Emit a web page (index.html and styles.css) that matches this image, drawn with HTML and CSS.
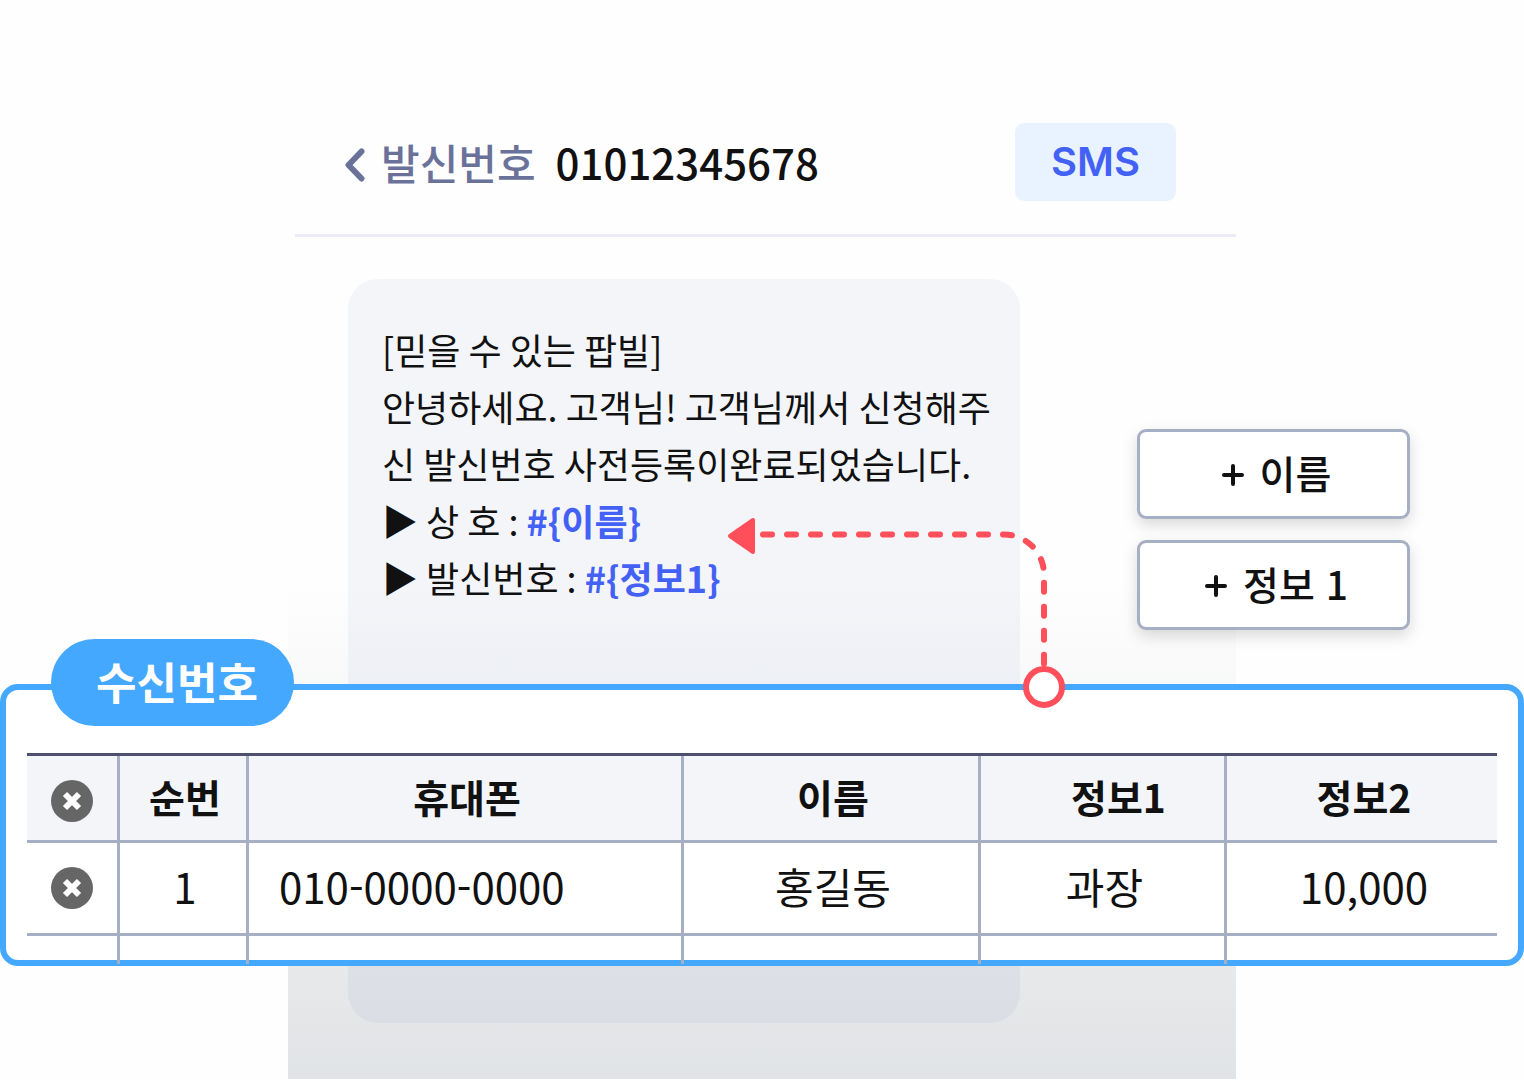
FILE: index.html
```html
<!DOCTYPE html>
<html lang="ko">
<head>
    <meta charset="UTF-8">
    <meta name="viewport" content="width=device-width, initial-scale=1.0">
    <title>문자 발신</title>
    <link rel="stylesheet" href="styles.css">
</head>
<body>
    <div class="stage">
        <main class="phone">
            <header class="phone-header">
                <button class="back" type="button" aria-label="뒤로">
                    <svg width="20" height="34" viewBox="0 0 20 34" fill="none" stroke="currentColor" stroke-width="6" stroke-linecap="round" stroke-linejoin="round">
                        <path d="M16.5 3.5 3.5 17l13 13.5"/>
                    </svg>
                </button>
                <span class="sender-label">발신번호</span>
                <span class="sender-number">01012345678</span>
                <span class="badge">SMS</span>
            </header>
            <div class="bubble">
                <p>[믿을 수 있는 팝빌]</p>
                <p>안녕하세요. 고객님! 고객님께서 신청해주신 발신번호 사전등록이완료되었습니다.</p>
                <p>▶ 상 호 : <b>#{이름}</b></p>
                <p>▶ 발신번호 : <b>#{정보1}</b></p>
            </div>
        </main>

        <div class="options">
            <button type="button">
                <svg width="22" height="22" viewBox="0 0 22 22" stroke="currentColor" stroke-width="4" stroke-linecap="round">
                    <path d="M2 11h18M11 2v18"/>
                </svg>
                이름
            </button>
            <button type="button">
                <svg width="22" height="22" viewBox="0 0 22 22" stroke="currentColor" stroke-width="4" stroke-linecap="round">
                    <path d="M2 11h18M11 2v18"/>
                </svg>
                정보 1
            </button>
        </div>

        <section class="recipients">
            <h2 class="pill">수신번호</h2>
            <table>
                <colgroup>
                    <col class="col-delete">
                    <col class="col-no">
                    <col class="col-phone">
                    <col class="col-name">
                    <col class="col-info1">
                    <col class="col-info2">
                </colgroup>
                <thead>
                    <tr>
                        <th>
                            <button class="delete" type="button" aria-label="전체 삭제">
                                <svg width="20" height="20" viewBox="0 0 20 20" stroke="#fff" stroke-width="6"><path d="M3 3l14 14M17 3 3 17"/></svg>
                            </button>
                        </th>
                        <th>순번</th>
                        <th>휴대폰</th>
                        <th>이름</th>
                        <th class="info1">정보1</th>
                        <th>정보2</th>
                    </tr>
                </thead>
                <tbody>
                    <tr>
                        <td>
                            <button class="delete" type="button" aria-label="삭제">
                                <svg width="20" height="20" viewBox="0 0 20 20" stroke="#fff" stroke-width="6"><path d="M3 3l14 14M17 3 3 17"/></svg>
                            </button>
                        </td>
                        <td>1</td>
                        <td class="number">010-0000-0000</td>
                        <td>홍길동</td>
                        <td>과장</td>
                        <td>10,000</td>
                    </tr>
                    <tr class="next-row">
                        <td></td>
                        <td></td>
                        <td></td>
                        <td></td>
                        <td></td>
                        <td></td>
                    </tr>
                </tbody>
            </table>
            <!-- arrow from the list up to the variable in the message -->
            <svg class="arrow" width="344" height="196" viewBox="0 0 344 196" fill="none" stroke="#ff4f5b">
                <path d="M39 20.5h241a40 40 0 0 1 40 40V153" stroke-width="6" stroke-linecap="round" stroke-dasharray="9 15"/>
                <path d="M6 22 29 6v32z" fill="#ff4f5b" stroke-width="4" stroke-linejoin="round"/>
                <circle cx="320" cy="173" r="18" fill="#fff" stroke-width="6"/>
            </svg>
        </section>
    </div>
</body>
</html>
```

FILE: styles.css
```css
* {
    box-sizing: border-box;
}
body {
    margin: 0;
    background-color: #fefefe;
    color: #111;
    font-family: "Noto Sans CJK KR", sans-serif;
}
button {
    font-family: inherit;
    color: inherit;
    cursor: pointer;
}
/* the phone, the option buttons and the list share one grid and overlap */
.stage {
    display: grid;
    grid-template-columns: 288fr 948fr 288fr;
    grid-template-rows: 684px auto 1fr;
}
.phone {
    grid-column: 2;
    grid-row: 1 / 4;
    position: relative;
    padding-bottom: 56px;
}
.phone::after {
    content: "";
    position: absolute;
    inset: 0;
    background: linear-gradient(rgba(10, 30, 50, 0) 54%, rgba(10, 30, 50, 0.12));
    pointer-events: none;
}
.phone-header {
    display: flex;
    align-items: center;
    margin-left: 7px;
    padding: 123px 60px 33px 50px;
    border-bottom: 3px solid #eaebf7;
    font-size: 42px;
    font-weight: 500;
    line-height: 78px;
}
.back {
    display: flex;
    padding: 5px 0 0;
    border: none;
    background: none;
    color: #6b7299;
}
.sender-label {
    margin-left: 16px;
    color: #6b7299;
}
.sender-number {
    margin-left: 20px;
}
.badge {
    margin-left: auto;
    padding: 0 36px;
    border-radius: 9px;
    background-color: #e9f3ff;
    color: #4461f5;
    font-family: Inter, sans-serif;
    font-size: 40px;
    font-weight: 600;
}
.bubble {
    min-height: 744px;
    margin: 42px 216px 0 60px;
    padding: 42px 16px 42px 34px;
    border-radius: 30px;
    background-color: #f3f5f9;
    font-size: 36px;
    font-feature-settings: "locl" 0, "calt" 0, "ccmp" 0;
    line-height: 57px;
}
.bubble p {
    margin: 0;
}
.bubble b {
    color: #4461f5;
}
.options {
    grid-column: 2 / 4;
    grid-row: 1;
    justify-self: end;
    align-self: end;
    z-index: 1;
    display: flex;
    flex-direction: column;
    gap: 21px;
    width: 273px;
    margin: 0 114px 54px 0;
}
.options button {
    display: flex;
    align-items: center;
    justify-content: center;
    gap: 16px;
    height: 90px;
    padding: 0 0 4px 6px;
    border: 3px solid #a6afc3;
    border-radius: 9px;
    background-color: #fff;
    box-shadow: 0 6px 15px rgba(0, 0, 0, 0.15);
    font-size: 39px;
    font-weight: 500;
}
.options svg {
    margin-top: 6px;
}
.recipients {
    grid-column: 1 / 4;
    grid-row: 2;
    position: relative;
    z-index: 2;
    padding: 63px 21px 0;
    border: 6px solid #45a8ff;
    border-radius: 18px;
    background-color: #fff;
}
.pill {
    position: absolute;
    top: -51px;
    left: 45px;
    margin: 0;
    padding: 2px 36px 4px 45px;
    border-radius: 44px;
    background-color: #45a8ff;
    color: #fff;
    font-size: 44px;
    line-height: 81px;
}
.arrow {
    position: absolute;
    top: -176px;
    right: 450px;
}
table {
    width: 100%;
    margin-bottom: -4px;
    border-top: 3px solid #4e506e;
    border-spacing: 0;
    table-layout: fixed;
    font-size: 42px;
    line-height: 60px;
    text-align: center;
}
.col-delete {
    width: 90px;
}
.col-no {
    width: 129px;
}
.col-phone {
    width: 435px;
}
.col-name {
    width: 297px;
}
.col-info1 {
    width: 246px;
}
.col-info2 {
    width: 273px;
}
th, td {
    height: 93px;
    padding: 0;
    border-bottom: 3px solid #a6afc3;
}
th {
    height: 87px;
    padding-top: 6px;
    background-color: #f3f5f9;
    font-size: 39px;
}
th + th, td + td {
    padding: 0 0 4px 4px;
    border-left: 3px solid #a6afc3;
}
th.info1 {
    padding-left: 32px;
}
td.number {
    padding-left: 30px;
    text-align: left;
}
.next-row td {
    height: 28px;
    border-bottom: none;
}
.delete {
    display: flex;
    align-items: center;
    justify-content: center;
    width: 42px;
    height: 42px;
    margin: 0 auto;
    padding: 0;
    border: none;
    border-radius: 50%;
    background-color: #666;
}
```
